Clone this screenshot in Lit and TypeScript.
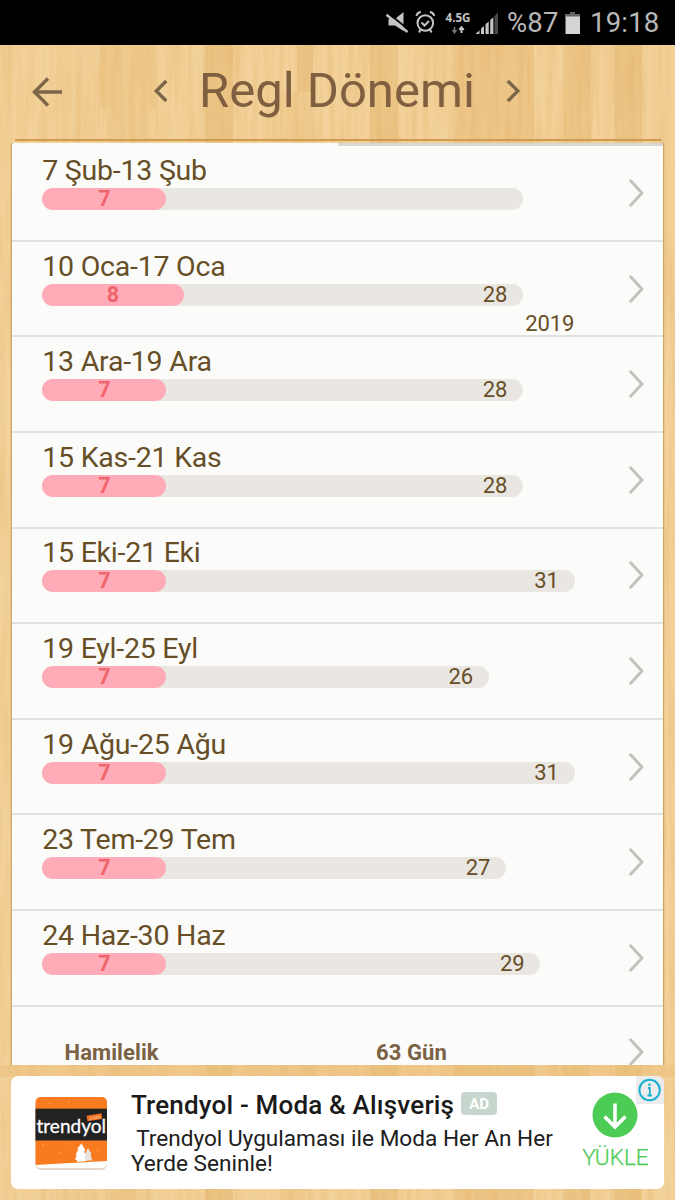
import { LitElement, html, css, svg } from "lit";
import { customElement, property } from "lit/decorators.js";

interface Period {
  label: string;
  days: number;
  cycle?: number;
  year?: string;
}

const DAY = 17.13;

const PERIODS: Period[] = [
  { label: "7 Şub-13 Şub", days: 7 },
  { label: "10 Oca-17 Oca", days: 8, cycle: 28, year: "2019" },
  { label: "13 Ara-19 Ara", days: 7, cycle: 28 },
  { label: "15 Kas-21 Kas", days: 7, cycle: 28 },
  { label: "15 Eki-21 Eki", days: 7, cycle: 31 },
  { label: "19 Eyl-25 Eyl", days: 7, cycle: 26 },
  { label: "19 Ağu-25 Ağu", days: 7, cycle: 31 },
  { label: "23 Tem-29 Tem", days: 7, cycle: 27 },
  { label: "24 Haz-30 Haz", days: 7, cycle: 29 },
];

const chevron = html`<svg width="18" height="30" viewBox="0 0 18 30" fill="none">
  <path d="M2.6 2.8 L14 15 L2.6 27.2" stroke="#c3c1be" stroke-width="3" stroke-linecap="round" stroke-linejoin="round" />
</svg>`;

// Wooden boards: [x, y, width, height, colour]
const BOARDS: [number, number, number, number, string][] = [
  [56, 0, 44, 1200, "#f0cf96"],
  [100, 0, 55, 110, "#eecb8e"],
  [106, 110, 44, 1090, "#eecb8f"],
  [205, 0, 28, 1200, "#ebc586"],
  [297, 0, 16, 92, "#eac485"],
  [280, 92, 34, 1108, "#efcc91"],
  [370, 0, 28, 1200, "#ebc687"],
  [453, 0, 81, 1200, "#edc789"],
  [563, 0, 27, 1200, "#ecc687"],
  [615, 0, 27, 1200, "#ebc586"],
];

@customElement("wood-texture")
class WoodTexture extends LitElement {
  static styles = css`
    :host { display: block; }
    svg { display: block; width: 100%; height: 100%; }
  `;
  render() {
    return html`<svg viewBox="0 0 675 1200" preserveAspectRatio="none">
      <filter id="grain" x="0" y="0" width="100%" height="100%" color-interpolation-filters="sRGB">
        <feTurbulence type="fractalNoise" baseFrequency="0.17 0.009" numOctaves="3" seed="8" />
        <feColorMatrix values="0 0 0 0 0.88  0 0 0 0 0.66  0 0 0 0 0.36  2.2 0 0 0 -0.75" />
      </filter>
      <rect width="675" height="1200" fill="#f2d29a" />
      ${BOARDS.map(([x, y, w, h, c]) => svg`<rect x=${x} y=${y} width=${w} height=${h} fill=${c} />`)}
      <rect width="675" height="1200" filter="url(#grain)" opacity="0.27" />
      <rect y="1065" width="675" height="12" fill="#eabd7a" opacity="0.45" />
    </svg>`;
  }
}

@customElement("status-bar")
class StatusBar extends LitElement {
  static styles = css`
    :host {
      display: flex; box-sizing: border-box; height: 45px; background: #000; color: #b9b9b9;
      padding-left: 385px; align-items: center; white-space: nowrap;
      font-family: Roboto, sans-serif; font-size: 27.5px; line-height: 49px;
    }
    svg { display: block; flex: none; }
    .percent { width: 58px; letter-spacing: 0.2px; }
    .time { letter-spacing: 0.2px; }
    .net { font-family: "Noto Sans", sans-serif; font-weight: 700; }
  `;
  render() {
    return html`
      <svg width="122" height="45" viewBox="385 0 122 45">
        <path d="M388.500 19h6.500L403.500 12v19l-8.500-5.500h-6.500z" fill="#c4c4c4" />
        <path d="M388.300 13.200L410 30.800" stroke="#000" stroke-width="1.800" />
        <path d="M386.500 14.800L407.500 32" stroke="#c4c4c4" stroke-width="2.400" />
        <g fill="none" stroke="#c4c4c4" stroke-width="2">
          <circle cx="425.300" cy="23" r="7.800" />
          <path d="M421.500 22.500l3 3 4.500-4.500" />
          <path d="M416.300 15.800q1.200-3.200 4.500-4M434.400 15.800q-1.200-3.200-4.500-4M420.500 29.500l-1.500 3M430 29.500l1.500 3" />
        </g>
        <text class="net" x="445.500" y="21.800" font-size="12.500" textLength="25" lengthAdjust="spacingAndGlyphs" fill="#c4c4c4">4.5G</text>
        <path d="M454.500 27v5.500M452.500 30l2 2.800 2-2.800" stroke="#777" stroke-width="1.500" fill="none" />
        <path d="M461.500 33v-5M459.200 29.800l2.300-2.600 2.300 2.600" stroke="#c4c4c4" stroke-width="2" fill="none" />
        <g fill="#c4c4c4">
          <path d="M475.500 34l4-3.800V34zM481 34v-5.500l3-2.600V34zM485.500 34v-9.800l3.200-2.800V34zM490.200 34V20.100l3.200-2.900V34z" />
          <path d="M494.500 34V16.200l3.500-4v21.800z" fill="#4a4a4a" />
        </g>
      </svg>
      <span class="percent">%87</span>
      <svg width="25" height="45" viewBox="565 0 25 45">
        <path d="M570 12h5v2h5v3h-15v-3h5z" fill="#666" />
        <path d="M565.500 16.500h14.500V34h-14.500z" fill="#d4d4d4" />
      </svg>
      <span class="time">19:18</span>
    `;
  }
}

@customElement("page-header")
class PageHeader extends LitElement {
  static styles = css`
    :host {
      display: flex; box-sizing: border-box; height: 94px; padding-left: 30px; align-items: flex-start;
      color: #805f40; font-family: Roboto, sans-serif;
    }
    svg { display: block; flex: none; margin-top: 28px; }
    .back { margin-right: 87px; }
    .title { font-size: 49px; line-height: 58px; margin: 17px 0 0; width: 325px; box-sizing: border-box; padding-left: 26px; font-weight: 400; white-space: nowrap; }
  `;
  render() {
    return html`
      <svg class="back" width="34" height="38" viewBox="30 73 34 38" fill="none" stroke="#7b6648" stroke-width="3.400">
        <path d="M34.500 92H62M48 78.500L34.500 92L48 105.500" />
      </svg>
      <svg width="22" height="38" viewBox="151 73 22 38" fill="none" stroke="#7b6648" stroke-width="3.400">
        <path d="M166.300 81L156.300 91L166.300 101" />
      </svg>
      <h1 class="title">Regl Dönemi</h1>
      <svg width="30" height="38" viewBox="498 73 30 38" fill="none" stroke="#7b6648" stroke-width="3.400">
        <path d="M507.800 81L517.800 91L507.800 101" />
      </svg>
    `;
  }
}

@customElement("period-row")
class PeriodRow extends LitElement {
  static styles = css`
    :host {
      display: flex; box-sizing: border-box; height: 95.600px; padding: 7.900px 17px 0 30.200px;
      border-bottom: 2px solid #e1e1df; justify-content: space-between;
      font-family: Roboto, sans-serif; color: #664e26; white-space: nowrap;
    }
    .main { width: 532px; }
    .label { font-size: 28.500px; line-height: 34px; letter-spacing: -0.220px; }
    .bar { display: flex; justify-content: space-between; height: 22px; border-radius: 11px; background: #eae6e1; font-size: 22px; line-height: 22.400px; letter-spacing: -0.100px; }
    .days { background: #ffacb8; border-radius: 11px; text-align: center; color: #f0646e; font-weight: 700; font-size: 21.500px; }
    .cycle { padding-right: 16px; }
    .year { font-size: 22px; line-height: 26px; text-align: right; margin-top: 5.500px; letter-spacing: -0.150px; }
    svg { display: block; margin-top: 24px; }
  `;
  @property({ attribute: false }) period!: Period;
  render() {
    const p = this.period;
    return html`
      <div class="main">
        <div class="label">${p.label}</div>
        <div class="bar" style="width:${(p.cycle ?? 28) * DAY + 1.5}px">
          <div class="days" style="width:${p.days * DAY + 4.3}px">${p.days}</div>
          <div class="cycle">${p.cycle ?? ""}</div>
        </div>
        ${p.year ? html`<div class="year">${p.year}</div>` : ""}
      </div>
      ${chevron}
    `;
  }
}

@customElement("ad-banner")
class AdBanner extends LitElement {
  static styles = css`
    :host {
      display: flex; position: relative; box-sizing: border-box; height: 113px; margin: 11px 11px 0;
      padding: 0 15px 0 24px; background: #fff; border-radius: 7px; overflow: hidden;
      font-family: Roboto, sans-serif; color: #202020; white-space: nowrap;
    }
    .logo { display: block; flex: none; margin: 19px 23px 0 -1px; }
    .copy { width: 451px; padding-top: 13px; }
    .head { display: flex; align-items: center; height: 32px; }
    .name { font-size: 26px; line-height: 32px; font-weight: 500; color: #1a1a1a; letter-spacing: 0.180px; }
    .tag { margin: -3px 0 0 7px; width: 36px; height: 23px; border-radius: 4px; background: #c6d6cd; color: #fff; font-size: 15px; line-height: 24px; font-weight: 700; text-align: center; }
    .text { font-size: 22.600px; line-height: 25.300px; margin-top: 4.500px; white-space: pre; }
    .install { display: flex; flex-direction: column; align-items: center; width: 67px; padding-top: 16px; color: #4ccb55; }
    .install svg { display: block; flex: none; margin-left: -2px; }
    .cta { font-size: 22.600px; line-height: 28px; margin: 6px 0 0; font-weight: 300; -webkit-text-stroke: 0.250px #4ccb55; }
    .info { position: absolute; right: 0; top: 0; }
    .word { font-family: Lato, sans-serif; }
  `;
  render() {
    return html`
      <svg class="logo" width="74" height="76" viewBox="34 1095 74 76">
        <clipPath id="tile"><rect x="35.500" y="1097" width="71.500" height="71.500" rx="5" /></clipPath>
        <rect x="35.500" y="1098" width="71.500" height="72" rx="6" fill="#d5d8da" />
        <g clip-path="url(#tile)">
          <rect x="35" y="1097" width="73" height="72" fill="#f97b20" />
          <rect x="35" y="1108.700" width="73" height="31.800" fill="#222223" />
          <path d="M35 1165q35-2 73-4v10H35z" fill="#fff" />
          <path d="M81.500 1143.500l4 7-1.500 1 3 5-1 1 1.500 3-4.500 1-6 .2 0-1.500-2-.5 1.500-4-.5-2 2-4-.5-1.500z" fill="#fff" />
          <path d="M88 1148l3.500 6-1 1 2 5.500h-7l-1-5z" fill="#e9e4df" />
          <g fill="#ffb67c"><circle cx="43" cy="1145" r=".7" /><circle cx="60" cy="1153" r=".7" /><circle cx="70" cy="1144" r=".7" /><circle cx="50" cy="1103" r=".7" /><circle cx="98" cy="1150" r=".7" /><circle cx="69" cy="1102" r=".7" /></g>
          <text class="word" x="36.500" y="1132.500" font-size="19.500" textLength="69.500" lengthAdjust="spacingAndGlyphs" fill="#fff" stroke="#fff" stroke-width="0.300">trendyol</text>
          <g transform="rotate(-9 94 1118)"><rect x="87" y="1114.500" width="15" height="5.800" fill="#ef6f22" /><text class="word" x="88.500" y="1119.300" font-size="5.500" textLength="12" fill="#ffd9b8">.com</text></g>
        </g>
      </svg>
      <div class="copy">
        <div class="head"><span class="name">Trendyol - Moda &amp; Alışveriş</span><span class="tag">AD</span></div>
        <div class="text"> Trendyol Uygulaması ile Moda Her An Her
Yerde Seninle!</div>
      </div>
      <div class="install">
        <svg width="46" height="46" viewBox="0 0 46 46">
          <circle cx="23" cy="23" r="22.500" fill="#4ccb55" />
          <path d="M23 11.500V34M12.500 24.500L23 35L33.500 24.500" fill="none" stroke="#fff" stroke-width="3.600" />
        </svg>
        <span class="cta">YÜKLE</span>
      </div>
      <svg class="info" width="28" height="28" viewBox="0 0 28 28">
        <rect width="28" height="28" fill="#ececee" />
        <circle cx="13.600" cy="14" r="10.200" fill="none" stroke="#1ab0d0" stroke-width="2" />
        <path d="M12 12h1.800v7.500M11.500 19.500h4.500" fill="none" stroke="#1ab0d0" stroke-width="1.800" />
        <circle cx="13.500" cy="8.800" r="1.300" fill="#1ab0d0" />
      </svg>
    `;
  }
}

@customElement("app-root")
class AppRoot extends LitElement {
  static styles = css`
    :host { display: block; position: relative; width: 675px; height: 1200px; overflow: hidden; font-family: Roboto, sans-serif; }
    .wood { position: absolute; inset: 0; }
    .screen { position: relative; display: flex; flex-direction: column; }
    .rule { height: 2px; margin: 0 14.500px 2px; background: #cf9a52; }
    .list { height: 922px; margin: 0 12px; overflow: hidden; background: #fbfbfa; border-radius: 2px 2px 0 0; box-shadow: 0 0 1.500px 0.300px #c79a5c; clip-path: inset(0 -2px 0 -2px); }
    .tabs { display: flex; justify-content: flex-end; height: 3.200px; }
    .track { width: 325px; background: #d9d7d2; }
    .summary { display: flex; height: 95.600px; box-sizing: border-box; padding: 32.600px 17px 0 52.500px; font-size: 22px; line-height: 28px; font-weight: 700; color: #7a6244; letter-spacing: 0.100px; }
    .kind { width: 311.500px; }
    .total { flex: 1; }
    .summary svg { display: block; margin-top: -2.500px; }
  `;
  render() {
    return html`
      <wood-texture class="wood"></wood-texture>
      <div class="screen">
        <status-bar></status-bar>
        <page-header></page-header>
        <div class="rule"></div>
        <div class="list">
          <div class="tabs"><div class="track"></div></div>
          ${PERIODS.map((p) => html`<period-row .period=${p}></period-row>`)}
          <div class="summary"><span class="kind">Hamilelik</span><span class="total">63 Gün</span>${chevron}</div>
        </div>
        <ad-banner></ad-banner>
      </div>
    `;
  }
}
